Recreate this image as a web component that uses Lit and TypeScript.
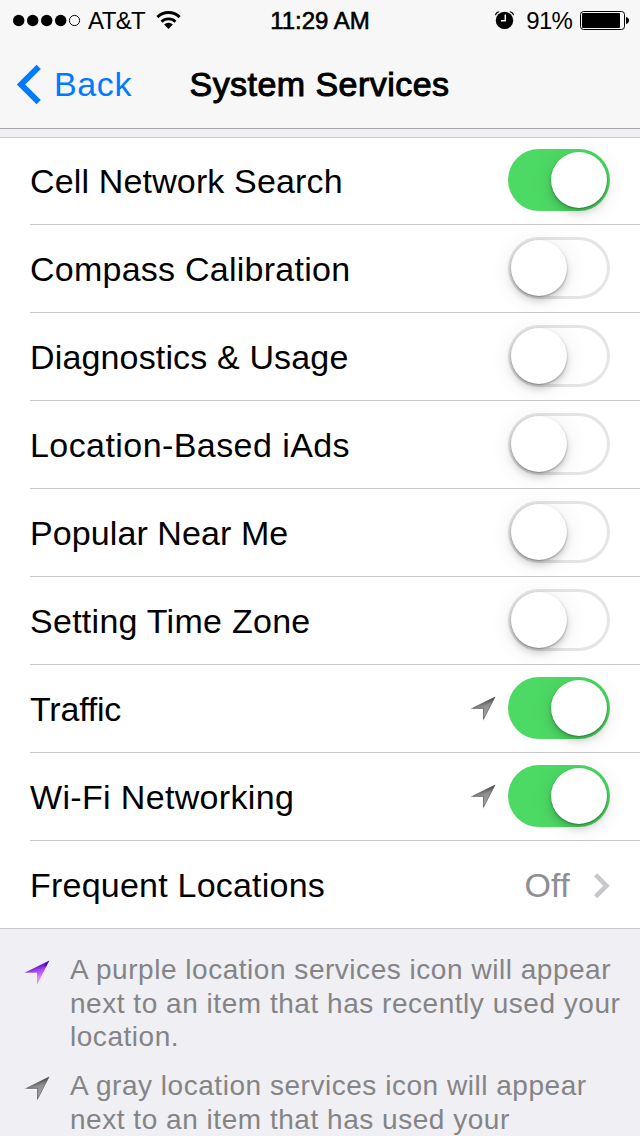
import { LitElement, html, css, svg } from "lit";
import { customElement, property } from "lit/decorators.js";
import { classMap } from "lit/directives/class-map.js";

interface Service {
  label: string;
  track: string;
  on?: boolean;
  used?: boolean;
}

const SERVICES: Service[] = [
  { label: "Cell Network Search", track: "0.15px", on: true },
  { label: "Compass Calibration", track: "0.25px" },
  { label: "Diagnostics & Usage", track: "0.15px" },
  { label: "Location-Based iAds", track: "0.43px" },
  { label: "Popular Near Me", track: "0.09px" },
  { label: "Setting Time Zone", track: "0.27px" },
  { label: "Traffic", track: "-0.2px", on: true, used: true },
  { label: "Wi-Fi Networking", track: "0.34px", on: true, used: true },
];

@customElement("ios-switch")
class IosSwitch extends LitElement {
  @property({ type: Boolean }) on = false;

  static styles = css`
    :host { display: block; }
    .track {
      box-sizing: border-box;
      display: flex;
      width: 102px;
      height: 62px;
      padding: 3px;
      border-radius: 31px;
      background: #fff;
      box-shadow: inset 0 0 0 3px #e5e5e5;
    }
    .track.on {
      justify-content: flex-end;
      background: #4cd964;
      box-shadow: none;
    }
    .knob {
      width: 56px;
      height: 56px;
      border-radius: 50%;
      background: #fff;
      box-shadow: 0 1px 2px rgba(0, 0, 0, 0.32), 0 5px 7px rgba(0, 0, 0, 0.16), 0 3px 24px rgba(0, 0, 0, 0.09);
    }
  `;

  render() {
    return html`<div class=${classMap({ track: true, on: this.on })}><div class="knob"></div></div>`;
  }
}

@customElement("location-arrow")
class LocationArrow extends LitElement {
  @property() tone = "gray";

  static styles = css`
    :host { display: block; width: 26px; height: 27px; }
    .art { display: block; }
  `;

  render() {
    const stops =
      this.tone === "purple"
        ? ["#4a00b4", "#a044f4", "#dc8cff"]
        : ["#3c3c3c", "#8f8f8f", "#a0a0a0"];
    return html`<svg class="art" width="26" height="27" viewBox="0 0 26 27">
      <defs>
        <linearGradient id="fill" gradientUnits="userSpaceOnUse" x1="15" y1="3" x2="19" y2="17">
          <stop offset="0" stop-color=${stops[0]}></stop>
          <stop offset="0.45" stop-color=${stops[1]}></stop>
          <stop offset="1" stop-color=${stops[2]}></stop>
        </linearGradient>
      </defs>
      <path d="M25.4 1.5L.5 13.9H13V26.1Z" fill="#fff"></path>
      <path d="M25.4.4L.5 12.8H13V25Z" fill="url(#fill)"></path>
      ${this.tone === "gray"
        ? svg`<path d="M24.7 1.6L13.5 23V12.3H3" fill="none" stroke="#444" stroke-opacity=".45" stroke-width="1"></path>`
        : svg`<path d="M25 .8L22 7L19.5 5.5Z" fill="#3f00a8" fill-opacity=".6"></path>`}
    </svg>`;
  }
}

@customElement("app-root")
class AppRoot extends LitElement {
  static styles = css`
    :host {
      display: block;
      width: 640px;
      height: 1136px;
      overflow: hidden;
      background: #efeff4;
      color: #000;
      font-family: "Liberation Sans", Arial, sans-serif;
      font-size: 34px;
    }
    svg { display: block; }
    .header {
      background: #f7f7f7;
      border-bottom: 1px solid #a7a7ab;
    }
    .status {
      display: grid;
      grid-template-columns: 1fr auto 1fr;
      height: 40px;
      padding: 0 11px 0 13px;
      font-size: 24px;
      line-height: 41px;
    }
    .side { display: flex; }
    .side.right { justify-content: flex-end; }
    .dots { margin-top: 14px; }
    .carrier { margin-left: 7px; letter-spacing: -0.6px; }
    .wifi { margin-left: 11px; margin-top: 11px; }
    .time { margin-right: 2px; letter-spacing: 0; -webkit-text-stroke: 0.6px #000; }
    .alarm { margin-top: 10px; }
    .percent { margin-left: 12px; letter-spacing: -0.8px; }
    .battery { margin-left: 8px; margin-top: 11px; }
    .nav {
      display: grid;
      grid-template-columns: 1fr auto 1fr;
      height: 88px;
      padding: 0 16px;
      line-height: 88px;
    }
    .back { display: flex; color: #007aff; letter-spacing: 0.6px; }
    .back-icon { margin: 24px 12px 0 0; }
    .title { margin-right: 1px; letter-spacing: 0.45px; -webkit-text-stroke: 1px #000; }
    .list {
      margin-top: 8px;
      background: #fff;
      box-shadow: inset 0 1px #c8c7cc, inset 0 -1px #c8c7cc;
    }
    .row {
      box-sizing: border-box;
      display: flex;
      height: 88px;
      margin-left: 30px;
      padding-right: 30px;
      border-bottom: 1px solid #c8c7cc;
      line-height: 88px;
    }
    .label { flex: 1; white-space: nowrap; }
    .arrow { margin: 31px 12px 0 0; }
    .switch { margin-top: 12px; }
    .value { color: #8e8e93; letter-spacing: 0.3px; margin-right: 23px; }
    .more { margin-top: 32px; }
    .notes {
      display: grid;
      gap: 15.5px;
      padding: 24px 0 0 24px;
      font-size: 28px;
      line-height: 33.5px;
      letter-spacing: 0.53px;
      color: #848486;
    }
    .note { display: flex; gap: 20px; }
    .note-icon { margin-top: 7px; }
    .note-text { margin: 0; white-space: nowrap; }
  `;

  render() {
    return html`
      <div class="header">
        <div class="status">
          <div class="side">
            <svg class="dots" width="68" height="13" viewBox="0 0 68 13">
              ${[5.7, 19.7, 33.7, 47.7].map((x) => svg`<circle cx=${x} cy="6.5" r="5.7"></circle>`)}
              <circle cx="61.5" cy="6.5" r="5.1" fill="none" stroke="#000" stroke-width="1"></circle>
            </svg>
            <span class="carrier">AT&amp;T</span>
            <svg class="wifi" width="26" height="18" viewBox="0 0 26 18">
              <path d="M1.4 6.1A16 16 0 0 1 23.6 6.1" fill="none" stroke="#000" stroke-width="3"></path>
              <path d="M5.5 10.8A10 10 0 0 1 19.5 10.8" fill="none" stroke="#000" stroke-width="2.8"></path>
              <path d="M12.5 18L8.1 13.5A6.3 6.3 0 0 1 16.9 13.5Z"></path>
            </svg>
          </div>
          <span class="time">11:29 AM</span>
          <div class="side right">
            <svg class="alarm" width="20" height="20" viewBox="0 0 20 20">
              <circle cx="10.5" cy="10.4" r="8.7"></circle>
              <path d="M1 5.2Q1.2 1.6 5.2 1.2L5.4 2Q3 3 1.8 5.3ZM20 5.2Q19.8 1.6 15.8 1.2L15.6 2Q18 3 19.2 5.3Z"></path>
              <path d="M11.3 4.5V10.7H7" fill="none" stroke="#f7f7f7" stroke-width="1.5"></path>
            </svg>
            <span class="percent">91%</span>
            <svg class="battery" width="49" height="19" viewBox="0 0 49 19">
              <rect x=".5" y=".5" width="44" height="18" rx="3" fill="none" stroke="#000"></rect>
              <rect x="2" y="2" width="38" height="15" rx="1"></rect>
              <path d="M46 6Q49 6.8 49 9.5T46 13Z"></path>
            </svg>
          </div>
        </div>
        <div class="nav">
          <div class="back">
            <svg class="back-icon" width="26" height="41" viewBox="0 0 26 41">
              <path d="M.8 20.5L20.6.7L24.8 4.9L9.2 20.5L24.8 36.1L20.6 40.3Z" fill="#007aff"></path>
            </svg>
            <span>Back</span>
          </div>
          <span class="title">System Services</span>
        </div>
      </div>
      <div class="list">
        ${SERVICES.map(
          (s) => html`<div class="row">
            <span class="label" style="letter-spacing:${s.track}">${s.label}</span>
            ${s.used ? html`<location-arrow class="arrow"></location-arrow>` : ""}
            <ios-switch class="switch" ?on=${s.on}></ios-switch>
          </div>`
        )}
        <div class="row">
          <span class="label" style="letter-spacing:0.22px">Frequent Locations</span>
          <span class="value">Off</span>
          <svg class="more" width="17" height="26" viewBox="0 0 17 26">
            <path d="M4.2.3L1 3.5L10.3 12.8L1 22.1L4.2 25.3L16.7 12.8Z" fill="#c7c7cc"></path>
          </svg>
        </div>
      </div>
      <div class="notes">
        <div class="note">
          <location-arrow class="note-icon" tone="purple"></location-arrow>
          <p class="note-text">A purple location services icon will appear<br />next to an item that has recently used your<br />location.</p>
        </div>
        <div class="note">
          <location-arrow class="note-icon"></location-arrow>
          <p class="note-text">A gray location services icon will appear<br />next to an item that has used your</p>
        </div>
      </div>
    `;
  }
}
